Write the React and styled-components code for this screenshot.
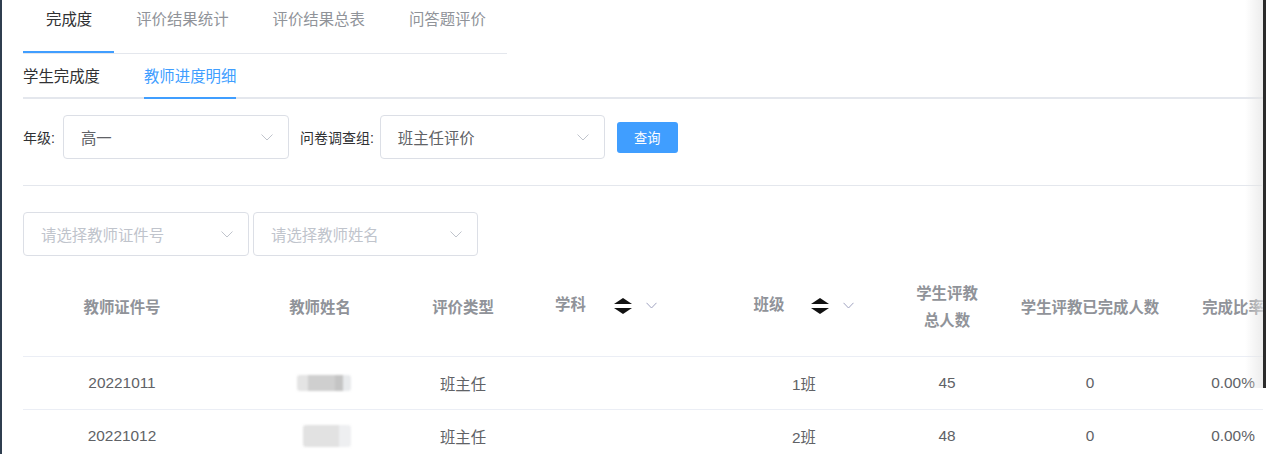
import React from "react";
import styled, { createGlobalStyle } from "styled-components";

const Global = createGlobalStyle`
  html, body { margin: 0; padding: 0; background: #fff; overflow: hidden; }
  body { font-family: "Liberation Sans", "Noto Sans CJK SC", sans-serif; }
  * { box-sizing: border-box; }
`;

const Page = styled.div`
  display: flex;
  width: 1266px;
  height: 454px;
  position: relative;
  overflow: hidden;
`;

const LeftEdge = styled.div`
  width: 2px;
  flex: none;
  background: #2f3e4f;
`;

const Main = styled.div`
  flex: 1;
  min-width: 0;
  overflow: hidden;
  padding-left: 21px;
`;

const RightEdge = styled.div`
  width: 3px;
  flex: none;
  display: flex;
  flex-direction: column;
`;

const RightBar = styled.div`
  height: 388px;
  background: #2b2b2b;
`;

const Shade = styled.div`
  position: absolute;
  top: 0;
  right: 3px;
  width: 18px;
  height: 388px;
  pointer-events: none;
  background: linear-gradient(to right, rgba(240, 240, 240, 0), rgba(228, 228, 228, 0.7));
`;

const TopTabs = styled.div`
  display: flex;
  width: 484px;
  height: 54px;
  border-bottom: 1px solid #e4e7ed;
`;

const TopTab = styled.div`
  padding: 0 22px 0 ${(p) => (p.$first ? 23 : 22)}px;
  height: 53px;
  line-height: 40px;
  font-size: 15.4px;
  color: ${(p) => (p.$active ? "#303133" : "#909399")};
  border-bottom: 2px solid ${(p) => (p.$active ? "#409eff" : "transparent")};
  margin-bottom: -1px;
  white-space: nowrap;
`;

const SubTabs = styled.div`
  display: flex;
  height: 45px;
  border-bottom: 2px solid #e4e7ed;
`;

const SubTab = styled.div`
  margin-right: 44px;
  padding-top: 3px;
  height: 45px;
  line-height: 40px;
  font-size: 15.4px;
  color: ${(p) => (p.$active ? "#409eff" : "#303133")};
  border-bottom: 2px solid ${(p) => (p.$active ? "#409eff" : "transparent")};
  white-space: nowrap;
`;

const FilterRow = styled.div`
  display: flex;
  align-items: center;
  margin-top: 16px;
  height: 44px;
`;

const Label = styled.span`
  font-size: 14px;
  color: #303133;
  white-space: nowrap;
  margin-left: ${(p) => p.$ml || 0}px;
  margin-right: ${(p) => p.$mr}px;
`;

const Select = styled.div`
  display: flex;
  align-items: center;
  justify-content: space-between;
  width: ${(p) => p.$w}px;
  height: 44px;
  border: 1px solid #dcdfe6;
  border-radius: 4px;
  padding: 0 15px 0 17px;
  font-size: 15.4px;
  color: ${(p) => (p.$placeholder ? "#c0c4cc" : "#606266")};
  background: #fff;
  flex: none;
  margin-right: ${(p) => p.$mr || 0}px;
`;

const QueryButton = styled.button`
  margin-left: 12px;
  width: 61px;
  height: 31px;
  border: none;
  border-radius: 3px;
  background: #409eff;
  color: #fff;
  font-family: "Liberation Sans", "Noto Sans CJK SC", sans-serif;
  font-size: 13.2px;
  padding: 0;
`;

const Divider = styled.div`
  margin-top: 26px;
  height: 1px;
  background: #e4e7ed;
  margin-right: 1px;
`;

const FilterRow2 = styled.div`
  display: flex;
  margin-top: 26px;
  height: 44px;
`;

const Table = styled.div`
  margin-top: 24px;
  width: 1254px;
`;

const Cols = "198px 198px 88px 198px 198px 88px 198px 88px";

const HeadRow = styled.div`
  display: grid;
  grid-template-columns: ${Cols};
  height: 77px;
  padding-bottom: 25px;
  border-bottom: 1px solid #ebeef5;
`;

const HeadCell = styled.div`
  display: flex;
  align-items: center;
  justify-content: center;
  text-align: center;
  font-size: 15.4px;
  font-weight: bold;
  color: #909399;
  line-height: 27px;
  white-space: nowrap;
`;

const HeadText = styled.span`
  margin-top: ${(p) => p.$mt || 0}px;
`;

const SortIcon = styled.svg`
  margin-left: ${(p) => p.$ml}px;
  margin-top: -2px;
  filter: blur(0.4px);
`;

const FilterIcon = styled.svg`
  margin-left: 13px;
  margin-top: -4px;
`;

const Row = styled.div`
  display: grid;
  grid-template-columns: ${Cols};
  height: 53px;
  border-bottom: 1px solid #ebeef5;
`;

const Cell = styled.div`
  display: flex;
  align-items: center;
  justify-content: center;
  font-size: 15.4px;
  color: #606266;
  white-space: nowrap;
`;

const Blur = styled.div`
  width: ${(p) => p.$w}px;
  height: ${(p) => p.$h}px;
  margin-left: ${(p) => p.$ml}px;
  border-radius: 3px;
  background: ${(p) => p.$bg};
  filter: blur(1px);
`;

const Chevron = () => (
  <svg width="12" height="7" viewBox="0 0 12 7">
    <path d="M0.5 0.5 L6 6 L11.5 0.5" fill="none" stroke="#c0c4cc" strokeWidth="1" />
  </svg>
);

const Sort = ({ ml }) => (
  <SortIcon $ml={ml} width="20" height="18" viewBox="0 0 20 18">
    <path d="M10 1 L19 7 L1 7 Z" fill="#111" />
    <path d="M1 11 L19 11 L10 17 Z" fill="#111" />
  </SortIcon>
);

const Filter = () => (
  <FilterIcon width="11" height="7" viewBox="0 0 11 7">
    <path d="M0.5 0.8 L5.5 6 L10.5 0.8" fill="none" stroke="#a0a3c0" strokeWidth="1" />
  </FilterIcon>
);

const rows = [
  { id: "20221011", cls: "1班", total: 45, done: 0, rate: "0.00%", blur: { w: 54, h: 16, ml: 8, bg: "linear-gradient(to right,#e4e4e4 0 20%,#cfcfcf 20% 70%,#c4c4c4 70% 85%,#e8eaec 85%)" } },
  { id: "20221012", cls: "2班", total: 48, done: 0, rate: "0.00%", blur: { w: 48, h: 22, ml: 14, bg: "linear-gradient(to right,#e2e2e2 0 75%,#eeeff1 75%)" } },
];

export default function App() {
  return (
    <>
      <Global />
      <Page>
        <LeftEdge />
        <Main>
          <TopTabs>
            <TopTab $active $first>完成度</TopTab>
            <TopTab>评价结果统计</TopTab>
            <TopTab>评价结果总表</TopTab>
            <TopTab>问答题评价</TopTab>
          </TopTabs>
          <SubTabs>
            <SubTab>学生完成度</SubTab>
            <SubTab $active>教师进度明细</SubTab>
          </SubTabs>
          <FilterRow>
            <Label $mr={8}>年级:</Label>
            <Select $w={226}>
              <span>高一</span>
              <Chevron />
            </Select>
            <Label $ml={11} $mr={6}>问卷调查组:</Label>
            <Select $w={225}>
              <span>班主任评价</span>
              <Chevron />
            </Select>
            <QueryButton>查询</QueryButton>
          </FilterRow>
          <Divider />
          <FilterRow2>
            <Select $w={226} $mr={4} $placeholder>
              <span>请选择教师证件号</span>
              <Chevron />
            </Select>
            <Select $w={225} $placeholder>
              <span>请选择教师姓名</span>
              <Chevron />
            </Select>
          </FilterRow2>
          <Table>
            <HeadRow>
              <HeadCell>教师证件号</HeadCell>
              <HeadCell>教师姓名</HeadCell>
              <HeadCell>评价类型</HeadCell>
              <HeadCell>
                <HeadText $mt={-6}>学科</HeadText>
                <Sort ml={27} />
                <Filter />
              </HeadCell>
              <HeadCell>
                <HeadText $mt={-6}>班级</HeadText>
                <Sort ml={26} />
                <Filter />
              </HeadCell>
              <HeadCell>
                学生评教
                <br />
                总人数
              </HeadCell>
              <HeadCell>学生评教已完成人数</HeadCell>
              <HeadCell>完成比率</HeadCell>
            </HeadRow>
            {rows.map((r) => (
              <Row key={r.id}>
                <Cell>{r.id}</Cell>
                <Cell>
                  <Blur $w={r.blur.w} $h={r.blur.h} $ml={r.blur.ml} $bg={r.blur.bg} />
                </Cell>
                <Cell>班主任</Cell>
                <Cell />
                <Cell>{r.cls}</Cell>
                <Cell>{r.total}</Cell>
                <Cell>{r.done}</Cell>
                <Cell>{r.rate}</Cell>
              </Row>
            ))}
          </Table>
        </Main>
        <RightEdge>
          <RightBar />
        </RightEdge>
        <Shade />
      </Page>
    </>
  );
}
